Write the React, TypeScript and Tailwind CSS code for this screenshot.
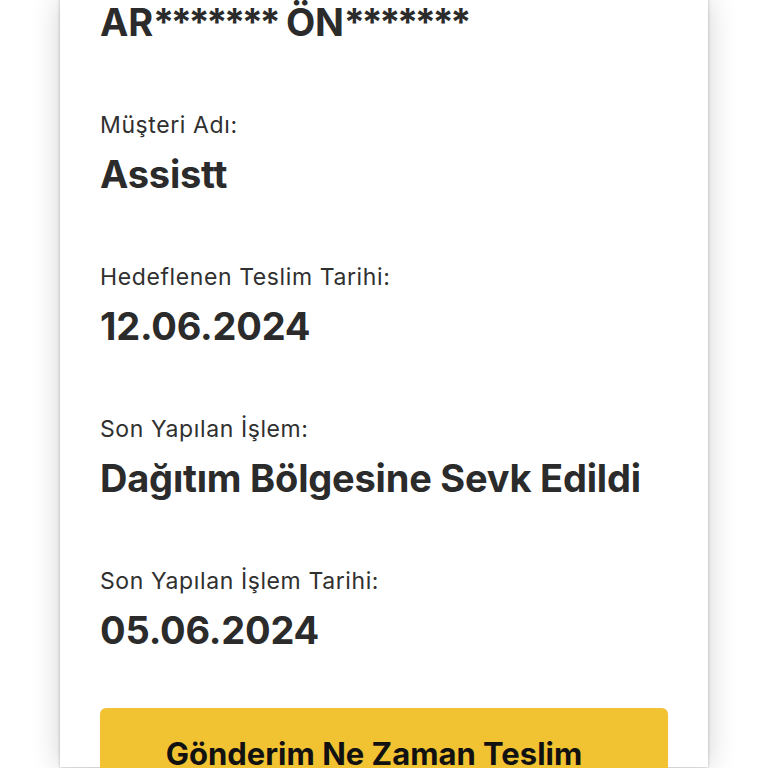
import React from "react";

const rows = [
  { label: "Müşteri Adı:", value: "Assistt" },
  { label: "Hedeflenen Teslim Tarihi:", value: "12.06.2024" },
  { label: "Son Yapılan İşlem:", value: "Dağıtım Bölgesine Sevk Edildi" },
  { label: "Son Yapılan İşlem Tarihi:", value: "05.06.2024" },
];

export default function App() {
  return (
    <div
      className="min-h-screen w-full bg-white overflow-hidden"
      style={{ fontFamily: "Inter, 'Noto Sans', sans-serif" }}
    >
      <div className="mx-auto w-[648px] h-[768px] bg-white px-10 shadow-[0_0_3px_rgba(0,0,0,0.25),0_0_28px_rgba(0,0,0,0.18)]">
        <div className="-mt-[1px] text-[38px] leading-[46px] font-bold text-[#2b2b2b] tracking-[-0.2px] whitespace-nowrap">
          AR<span className="tracking-[-3.5px]">*******</span> ÖN<span className="tracking-[-3.5px]">*******</span>
        </div>
        {rows.map((r) => (
          <div key={r.label} className="mt-[66px]">
            <div className="text-[23px] leading-[28px] text-[#303030] tracking-[0.6px]">{r.label}</div>
            <div className="mt-[12px] text-[38px] leading-[46px] font-bold text-[#2b2b2b] tracking-[-0.2px] whitespace-nowrap">
              {r.value}
            </div>
          </div>
        ))}
        <div className="mt-[55px] h-[120px] rounded-md bg-[#f1c232] flex justify-center pt-[27px] pr-[20px]">
          <div className="text-center text-[31px] leading-[38px] font-bold text-[#111111]">
            Gönderim Ne Zaman Teslim
            <br />
            Edilecek?
          </div>
        </div>
      </div>
    </div>
  );
}
